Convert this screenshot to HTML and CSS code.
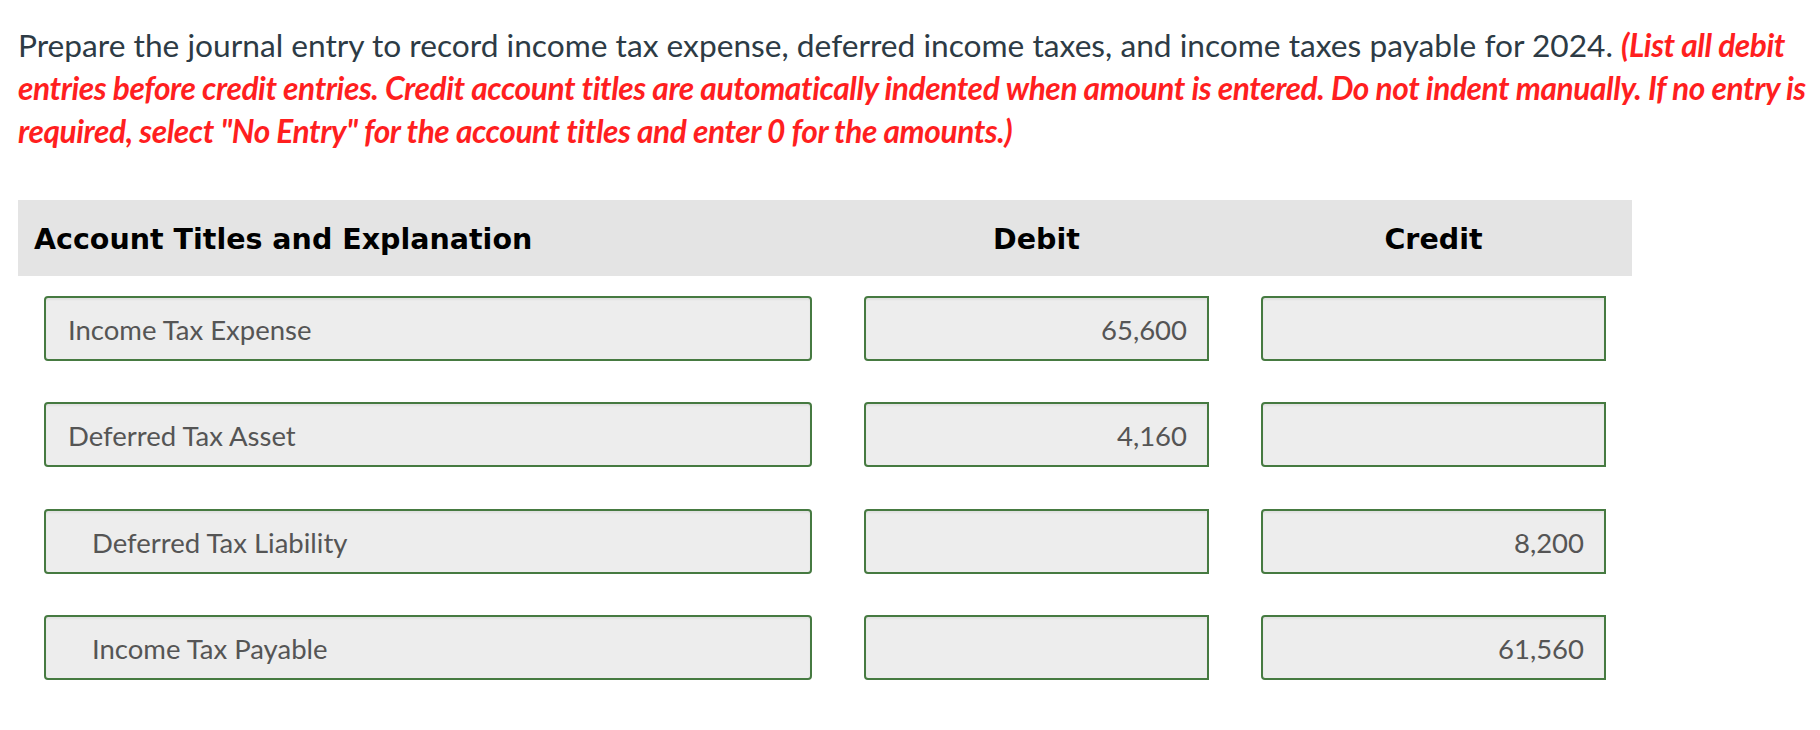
FILE: index.html
```html
<!doctype html>
<html lang="en">
  <head>
    <meta charset="UTF-8" />
    <meta name="viewport" content="width=device-width, initial-scale=1.0" />
    <title>Journal entry</title>
    <link rel="stylesheet" href="styles.css">
  </head>
  <body>
    <main class="question">
      <p class="prompt">
        Prepare the journal entry to record income tax expense, deferred income taxes, and income taxes payable for 2024.
        <em class="note">(List all debit entries before credit entries. Credit account titles are automatically indented when amount is entered. Do not indent manually. If no entry is required, select "No Entry" for the account titles and enter 0 for the amounts.)</em>
      </p>

      <div class="journal">
        <div class="journal-head">
          <div class="col-title">Account Titles and Explanation</div>
          <div class="col-amount">Debit</div>
          <div class="col-amount">Credit</div>
        </div>

        <div class="journal-rows">
          <div class="journal-row">
            <div class="field account">Income Tax Expense</div>
            <div class="field amount">65,600</div>
            <div class="field amount"></div>
          </div>
          <div class="journal-row">
            <div class="field account">Deferred Tax Asset</div>
            <div class="field amount">4,160</div>
            <div class="field amount"></div>
          </div>
          <div class="journal-row">
            <div class="field account credit">Deferred Tax Liability</div>
            <div class="field amount"></div>
            <div class="field amount">8,200</div>
          </div>
          <div class="journal-row">
            <div class="field account credit">Income Tax Payable</div>
            <div class="field amount"></div>
            <div class="field amount">61,560</div>
          </div>
        </div>
      </div>
    </main>
  </body>
</html>
```

FILE: styles.css
```css
body {
  margin: 0;
  padding: 0;
  overflow-x: hidden;
  background-color: #fff;
  font-family: Lato, "Open Sans", sans-serif;
  color: #2d3b45;
}

.question {
  padding: 24px 0 0 18px;
}

.prompt {
  margin: 0 -8px 47px 0;
  font-size: 31.7px;
  line-height: 43px;
}

.note {
  font-weight: 700;
  letter-spacing: -0.42px;
  color: #ff1f1f;
}

.journal {
  width: 1614px;
}

.journal-head {
  display: grid;
  grid-template-columns: 778px 345px 345px;
  column-gap: 52px;
  align-items: center;
  height: 76px;
  padding: 3px 0 0 16px;
  box-sizing: border-box;
  background-color: #e4e4e4;
  color: #000;
  font-family: "DejaVu Sans", Verdana, sans-serif;
  font-weight: 700;
  font-size: 28.5px;
}
.col-amount {
  text-align: center;
}

.journal-rows {
  display: flex;
  flex-direction: column;
  gap: 41.3px;
  padding: 20px 0 0 26px;
}

.journal-row {
  display: grid;
  grid-template-columns: 768px 345px 345px;
  column-gap: 52px;
}

.field {
  height: 65px;
  box-sizing: border-box;
  display: flex;
  align-items: center;
  padding: 2px 20px 0 22px;
  border: 2px solid #467a41;
  border-radius: 4px;
  background-color: #ededed;
  box-shadow: inset 0 2px 2px rgba(0, 0, 0, 0.05);
  color: #555;
  font-size: 27.5px;
}

.field.credit {
  padding-left: 46px;
}

.field.amount {
  justify-content: flex-end;
  border-radius: 4px 0 0 4px;
}
```
